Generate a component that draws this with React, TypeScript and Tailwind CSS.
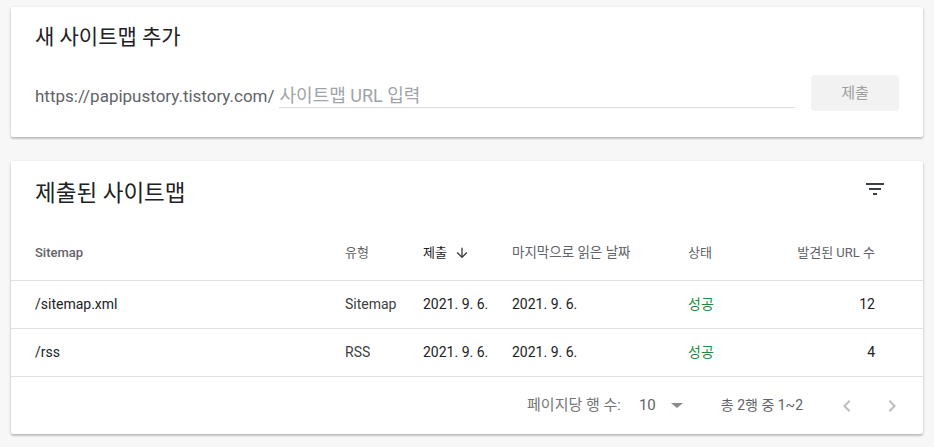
import React from 'react';

type SitemapRow = {
  path: string;
  kind: string;
  submitted: string;
  lastRead: string;
  status: string;
  urls: number;
};

const rows: SitemapRow[] = [
  { path: '/sitemap.xml', kind: 'Sitemap', submitted: '2021. 9. 6.', lastRead: '2021. 9. 6.', status: '성공', urls: 12 },
  { path: '/rss', kind: 'RSS', submitted: '2021. 9. 6.', lastRead: '2021. 9. 6.', status: '성공', urls: 4 },
];

const cols = 'grid grid-cols-[310px_78px_89px_176px_80px_1fr] items-center pl-[24px] pr-[48px]';

function FilterIcon() {
  return (
    <svg width="24" height="24" viewBox="0 0 24 24" fill="#3c4043">
      <path d="M10 18h4v-2h-4v2zM3 6v2h18V6H3zm3 7h12v-2H6v2z" />
    </svg>
  );
}

function ArrowDown() {
  return (
    <svg width="16" height="16" viewBox="0 0 24 24" fill="#3c4043">
      <path d="M20 12l-1.41-1.41L13 16.17V4h-2v12.17l-5.58-5.59L4 12l8 8 8-8z" />
    </svg>
  );
}

function Chevron({ dir }: { dir: 'left' | 'right' }) {
  return (
    <svg width="24" height="24" viewBox="0 0 24 24" fill="#bdbdbd">
      {dir === 'left' ? (
        <path d="M15.41 7.41L14 6l-6 6 6 6 1.41-1.41L10.83 12z" />
      ) : (
        <path d="M10 6L8.59 7.41 13.17 12l-4.58 4.59L10 18l6-6z" />
      )}
    </svg>
  );
}

export default function App() {
  return (
    <div className="min-h-[447px] bg-[#f7f7f7] px-[11px] pt-[7px] pb-[13px] font-['Roboto','Noto_Sans_CJK_KR',sans-serif]">
      {/* 새 사이트맵 추가 */}
      <section className="rounded-[2px] bg-white px-[24px] pt-[16px] pb-[26px] shadow-[0_1px_3px_rgba(0,0,0,0.2),0_2px_2px_rgba(0,0,0,0.12)]">
        <h2 className="text-[21px] leading-[28px] text-[#202124]">새 사이트맵 추가</h2>
        <div className="mt-[24px] flex h-[36px] items-end">
          <div className="flex flex-1 items-end pb-[3px]">
            <span className="text-[17px] leading-[24px] text-[#5f6368]">https://papipustory.tistory.com/</span>
            <input
              placeholder="사이트맵 URL 입력"
              className="ml-[4px] h-[25px] flex-1 border-b border-[#dadce0] pl-[1px] text-[18px] leading-[24px] text-[#202124] outline-none placeholder:text-[#a0a4a8]"
            />
          </div>
          <button
            type="button"
            disabled
            className="ml-[16px] h-[36px] w-[88px] rounded-[4px] bg-[#f2f2f2] text-[15px] text-[#9e9e9e]"
          >
            제출
          </button>
        </div>
      </section>

      {/* 제출된 사이트맵 */}
      <section className="mt-[24px] rounded-[2px] bg-white shadow-[0_1px_3px_rgba(0,0,0,0.2),0_2px_2px_rgba(0,0,0,0.12)]">
        <div className="flex h-[64px] items-center justify-between pl-[24px] pr-[24px]">
          <h2 className="text-[22.5px] leading-[28px] text-[#202124]">제출된 사이트맵</h2>
          <button type="button" className="mb-[8px] flex h-[48px] w-[48px] items-center justify-center">
            <FilterIcon />
          </button>
        </div>

        <div className={`${cols} h-[56px] border-b border-[#e0e0e0] text-[13px] text-[#5f6368]`}>
          <span className="font-medium">Sitemap</span>
          <span>유형</span>
          <span className="flex items-center text-[#202124]">
            제출
            <span className="ml-[7px]">
              <ArrowDown />
            </span>
          </span>
          <span className="text-[13.5px]">마지막으로 읽은 날짜</span>
          <span>상태</span>
          <span className="text-right">발견된 URL 수</span>
        </div>

        {rows.map((row) => (
          <div key={row.path} className={`${cols} h-[48px] border-b border-[#e0e0e0] text-[14px] text-[#202124]`}>
            <span>{row.path}</span>
            <span className="text-[#3c4043]">{row.kind}</span>
            <span>{row.submitted}</span>
            <span>{row.lastRead}</span>
            <span className="text-[#1e8e3e]">{row.status}</span>
            <span className="text-right">{row.urls}</span>
          </div>
        ))}

        <div className="flex h-[57px] items-center justify-end pr-[19px] text-[14px] text-[#757575]">
          <span className="text-[15px]">페이지당 행 수:</span>
          <span className="ml-[18px] text-[15px] text-[#5f6368]">10</span>
          <span className="ml-[15px] h-0 w-0 border-x-[6px] border-t-[5px] border-x-transparent border-t-[#8a8a8a]" />
          <span className="ml-[38px] text-[#5f6368]">총 2행 중 1~2</span>
          <button type="button" disabled className="ml-[32px] flex h-[24px] w-[24px] items-center justify-center">
            <Chevron dir="left" />
          </button>
          <button type="button" disabled className="ml-[21px] flex h-[24px] w-[24px] items-center justify-center">
            <Chevron dir="right" />
          </button>
        </div>
      </section>
    </div>
  );
}
